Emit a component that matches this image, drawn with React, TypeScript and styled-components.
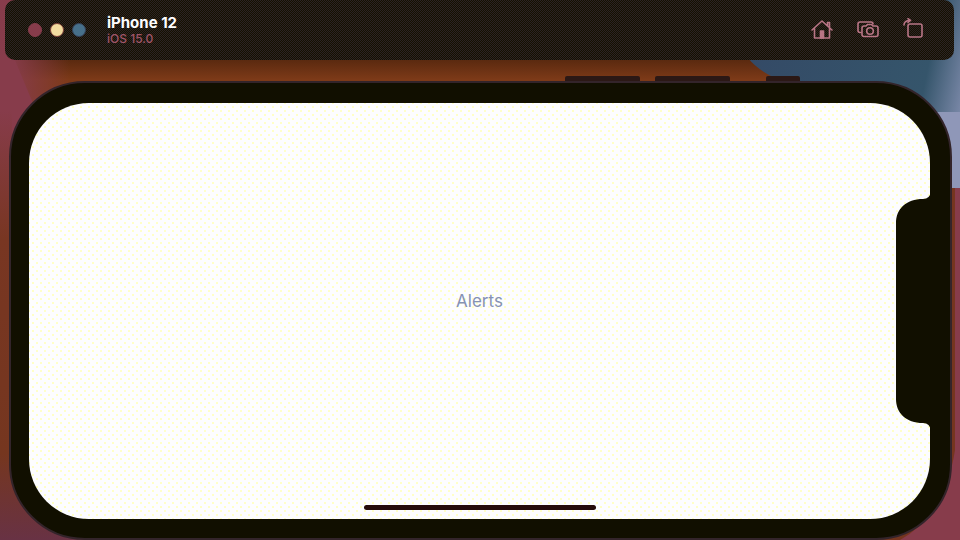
import React from 'react';
import styled, { createGlobalStyle } from 'styled-components';

const GlobalStyle = createGlobalStyle`
  * { box-sizing: border-box; }
  body {
    margin: 0;
    font-family: Inter, "Liberation Sans", sans-serif;
    overflow: hidden;
  }
`;

const Desktop = styled.div`
  position: relative;
  isolation: isolate;
  display: flex;
  flex-direction: column;
  min-height: 100vh;
  background: #873c4b;
`;

const Wallpaper = styled.svg`
  position: absolute;
  inset: 0;
  width: 100%;
  height: 100%;
  z-index: -1;
`;

const Toolbar = styled.header`
  display: flex;
  align-items: center;
  height: 60px;
  margin: 0 6px 0 5px;
  padding: 0 28px 0 23px;
  border-radius: 10px;
  background-color: #151100;
  background-image: conic-gradient(#2b2324 25%, transparent 0 50%, #2b2324 0 75%, transparent 0);
  background-size: 2px 2px;
`;

const WindowControls = styled.div`
  display: flex;
  gap: 8px;
`;

const ControlDot = styled.button<{ $color: string; $ring: string }>`
  width: 14px;
  height: 14px;
  padding: 0;
  border: 1px solid ${(p) => p.$ring};
  border-radius: 50%;
  background: ${(p) => p.$color};
`;

const Titles = styled.div`
  flex: 1;
  margin-left: 21px;
`;

const DeviceName = styled.h1`
  margin: 0;
  font-size: 15px;
  line-height: 17px;
  font-weight: 700;
  color: #fdfdff;
`;

const SystemVersion = styled.p`
  margin: 0;
  font-size: 12px;
  line-height: 16px;
  font-weight: 500;
  color: #a05568;
`;

const Actions = styled.div`
  display: flex;
  gap: 22px;
`;

const ActionButton = styled.button`
  display: flex;
  width: 24px;
  height: 24px;
  padding: 0;
  border: 0;
  background: none;
  color: #b87585;

  svg {
    width: 24px;
    height: 24px;
    fill: none;
    stroke: currentColor;
    stroke-width: 1.6;
    stroke-linecap: round;
    stroke-linejoin: round;
  }
`;

const Phone = styled.main`
  position: relative;
  flex: 1;
  display: flex;
  margin: 21px 8px 0 9px;
  padding: 20px 20px 19px 18px;
  border: 2px solid #33242a;
  border-radius: 76px;
  background: #110f00;
`;

const SideButton = styled.span<{ $left: string; $width: string }>`
  position: absolute;
  top: -7px;
  left: ${(p) => p.$left};
  width: ${(p) => p.$width};
  height: 5px;
  border-radius: 2px 2px 0 0;
  background: #2b1815;
`;

const Screen = styled.section`
  position: relative;
  flex: 1;
  display: flex;
  align-items: center;
  justify-content: center;
  border-radius: 60px;
  background-color: #fdfdff;
  background-image: radial-gradient(circle, #ffffc8 1px, transparent 1px),
    radial-gradient(circle, #ffffc8 1px, transparent 1px);
  background-size: 8px 8px;
  background-position: 0 0, 4px 4px;
`;

const AlertsButton = styled.button`
  margin-top: -20px;
  padding: 0;
  border: 0;
  background: none;
  font: 400 17px/22px Inter, "Liberation Sans", sans-serif;
  color: #8592b4;
`;

const Notch = styled.svg`
  position: absolute;
  top: 50%;
  right: -1px;
  width: 36px;
  height: 240px;
  transform: translateY(-50%);
  fill: #110f00;
`;

const HomeIndicator = styled.div`
  position: absolute;
  bottom: 9px;
  left: 50%;
  width: 232px;
  height: 5px;
  border-radius: 3px;
  background: #250b0c;
  transform: translateX(-50%);
`;

export default function App() {
  return (
    <Desktop>
      <GlobalStyle />
      <Wallpaper viewBox="0 0 960 540" preserveAspectRatio="none" aria-hidden="true">
        <defs>
          <linearGradient id="amber" x1="0" y1="0" x2="0" y2="1">
            <stop offset="0" stopColor="#57280f" />
            <stop offset="0.35" stopColor="#7d3a18" />
            <stop offset="1" stopColor="#7d3a1b" />
          </linearGradient>
          <linearGradient id="amberFade" x1="0" y1="0" x2="1" y2="0">
            <stop offset="0" stopColor="#873c4b" />
            <stop offset="1" stopColor="#873c4b" stopOpacity="0" />
          </linearGradient>
          <linearGradient id="edge" x1="0" y1="0" x2="0" y2="1">
            <stop offset="0" stopColor="#873c4b" />
            <stop offset="0.3" stopColor="#783622" />
            <stop offset="0.8" stopColor="#75361f" />
            <stop offset="1" stopColor="#683244" />
          </linearGradient>
          <linearGradient id="sky" gradientUnits="userSpaceOnUse" x1="750" y1="60" x2="965" y2="105">
            <stop offset="0" stopColor="#344a66" />
            <stop offset="0.8" stopColor="#35556b" />
            <stop offset="1" stopColor="#7e8bab" />
          </linearGradient>
        </defs>
        <rect width="960" height="540" fill="#873c4b" />
        <path d="M14 58H800V120H40Z" fill="url(#amber)" />
        <rect x="10" y="58" width="60" height="62" fill="url(#amberFade)" />
        <path d="M0 110H12V460Q20 520 80 540H0Z" fill="url(#edge)" />
        <path d="M748 58Q760 73 785 82L850 115H960V0H748Z" fill="url(#sky)" />
        <path d="M935 112H960V188H935Z" fill="#8f97b8" />
        <path d="M950 188H955V450Q945 515 900 540H870Q950 500 950 430Z" fill="#75351f" />
      </Wallpaper>
      <Toolbar>
        <WindowControls>
          <ControlDot aria-label="Close" $color="#873c4b" $ring="#873c4b" />
          <ControlDot aria-label="Minimize" $color="#f3dda0" $ring="#7c4036" />
          <ControlDot aria-label="Zoom" $color="#47708a" $ring="#35435a" />
        </WindowControls>
        <Titles>
          <DeviceName>iPhone 12</DeviceName>
          <SystemVersion>iOS 15.0</SystemVersion>
        </Titles>
        <Actions>
          <ActionButton aria-label="Home">
            <svg viewBox="0 0 24 24">
              <path d="M2 12 12 3 22 12M4.500 10.500V20H19.500V10.500M17.500 7.500V4.500H19.500V9.500" />
              <path d="M10.500 20V13H13.500V20Z" fill="currentColor" />
            </svg>
          </ActionButton>
          <ActionButton aria-label="Screenshot">
            <svg viewBox="0 0 24 24">
              <path d="M5 14.500H4Q2 14.500 2 12.500V6Q2 4 4 4H15Q17 4 17 6" />
              <path d="M8 8H10L11.500 6.500H15.500L17 8H20Q22 8 22 10V16.500Q22 18.500 20 18.500H8Q6 18.500 6 16.500V10Q6 8 8 8Z" />
              <circle cx="14" cy="13" r="3.300" />
            </svg>
          </ActionButton>
          <ActionButton aria-label="Rotate">
            <svg viewBox="0 0 24 24">
              <rect x="6" y="6" width="14" height="13" rx="2" />
              <path d="M2 7Q2 2.500 8 2.500M6 0.700 8.500 2.500 6 4.500" />
            </svg>
          </ActionButton>
        </Actions>
      </Toolbar>
      <Phone>
        <SideButton $left="59%" $width="8%" />
        <SideButton $left="68.6%" $width="8%" />
        <SideButton $left="80.4%" $width="3.6%" />
        <Screen>
          <AlertsButton>Alerts</AlertsButton>
          <Notch viewBox="0 0 36 240" aria-hidden="true">
            <path d="M36 0Q35 8 28 8C11 8 1 18 1 32V208C1 222 11 232 28 232Q35 232 36 240Z" />
          </Notch>
          <HomeIndicator />
        </Screen>
      </Phone>
    </Desktop>
  );
}
